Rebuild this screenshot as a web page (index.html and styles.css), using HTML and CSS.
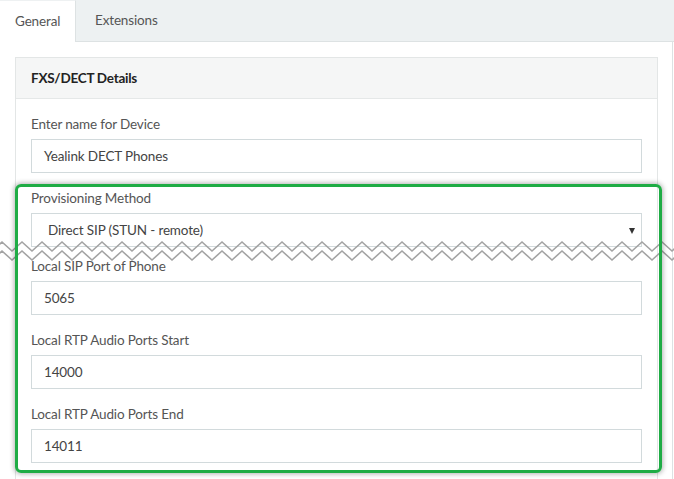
FILE: index.html
```html
<!DOCTYPE html>
<html>
<head>
<meta charset="utf-8">
<link rel="stylesheet" href="styles.css">
</head>
<body>
<div class="page">
  <div class="tabs">
    <div class="tab active">General</div>
    <div class="tab second">Extensions</div>
  </div>
  <div class="content">
    <div class="panel">
      <div class="panel-head">FXS/DECT Details</div>
      <div class="panel-body">
        <div class="group">
          <div class="label">Enter name for Device</div>
          <div class="field">Yealink DECT Phones</div>
        </div>
        <div class="group group-cut">
          <div class="label">Provisioning Method</div>
          <div class="field select">Direct SIP (STUN - remote)<span class="caret"></span></div>
        </div>
        <div class="group">
          <div class="label">Local SIP Port of Phone</div>
          <div class="field">5065</div>
        </div>
        <div class="group">
          <div class="label">Local RTP Audio Ports Start</div>
          <div class="field">14000</div>
        </div>
        <div class="group">
          <div class="label">Local RTP Audio Ports End</div>
          <div class="field">14011</div>
        </div>
      </div>
    </div>
  </div>
  <svg class="tear" width="674" height="24" viewBox="0 0 674 24">
    <polyline class="zz" points="-8,11 2,2 12,11 22,2 32,11 42,2 52,11 62,2 72,11 82,2 92,11 102,2 112,11 122,2 132,11 142,2 152,11 162,2 172,11 182,2 192,11 202,2 212,11 222,2 232,11 242,2 252,11 262,2 272,11 282,2 292,11 302,2 312,11 322,2 332,11 342,2 352,11 362,2 372,11 382,2 392,11 402,2 412,11 422,2 432,11 442,2 452,11 462,2 472,11 482,2 492,11 502,2 512,11 522,2 532,11 542,2 552,11 562,2 572,11 582,2 592,11 602,2 612,11 622,2 632,11 642,2 652,11 662,2 672,11 682,2"/>
    <polyline class="zz" points="-8,20 2,11 12,20 22,11 32,20 42,11 52,20 62,11 72,20 82,11 92,20 102,11 112,20 122,11 132,20 142,11 152,20 162,11 172,20 182,11 192,20 202,11 212,20 222,11 232,20 242,11 252,20 262,11 272,20 282,11 292,20 302,11 312,20 322,11 332,20 342,11 352,20 362,11 372,20 382,11 392,20 402,11 412,20 422,11 432,20 442,11 452,20 462,11 472,20 482,11 492,20 502,11 512,20 522,11 532,20 542,11 552,20 562,11 572,20 582,11 592,20 602,11 612,20 622,11 632,20 642,11 652,20 662,11 672,20 682,11"/>
  </svg>
  <div class="highlight"></div>
</div>
</body>
</html>
```

FILE: styles.css
```css
* { box-sizing: border-box; }
html, body { margin: 0; padding: 0; background: #fff; }
body {
  font-family: "Lato", "Open Sans", sans-serif;
  font-size: 13.5px;
  letter-spacing: -0.15px;
  color: #555;
}
.page {
  position: relative;
  width: 674px;
  height: 479px;
  overflow: hidden;
}
.tabs {
  display: flex;
  height: 42px;
  background: #edf1f2;
  border-bottom: 1px solid #dde2e3;
  width: 674px;
}
.tab {
  height: 42px;
  line-height: 41px;
  padding: 0 15px;
  color: #555;
}
.tab.active {
  background: #fff;
  border-right: 1px solid #dde2e3;
  border-top: 1px solid #eef1f2;
  width: 76px;
  margin-bottom: -1px;
  height: 42px;
}
.tab.second { padding-left: 19px; }
.content {
  height: 437px;
  border-right: 1px solid #dde2e3;
  padding: 15px 0 0 15px;
  width: 673px;
}
.panel {
  width: 643px;
  border: 1px solid #e3e6e6;
  border-bottom: none;
  height: 440px;
}
.panel-head {
  height: 41px;
  background: #f5f6f6;
  border-bottom: 1px solid #e5e8e8;
  padding: 0 15px;
  line-height: 40px;
  font-weight: bold;
  letter-spacing: -0.25px;
  color: #222;
}
.panel-body {
  padding: 15px 15px 0 15px;
}
.group { margin-bottom: 15px; }
.group-cut { margin-bottom: 9px; }
.label {
  height: 20px;
  line-height: 20px;
  margin-bottom: 5px;
  color: #555;
}
.field {
  position: relative;
  height: 34px;
  border: 1px solid #d2dadc;
  padding: 0 12px;
  line-height: 32px;
  color: #444;
}
.field.select { padding-left: 16px; }
.caret {
  position: absolute;
  right: 6px;
  top: 14px;
  width: 0;
  height: 0;
  border-left: 3.5px solid transparent;
  border-right: 3.5px solid transparent;
  border-top: 6px solid #333;
}
.tear {
  position: absolute;
  left: 0;
  top: 240px;
}
.zz {
  fill: none;
  stroke: #a3a3a3;
  stroke-width: 1.6;
}
.highlight {
  position: absolute;
  left: 15px;
  top: 184px;
  width: 647px;
  height: 289px;
  border: 3px solid #1fac45;
  border-radius: 6px;
  box-shadow: 0 0 5px 1px rgba(0, 0, 0, 0.3);
}
```
